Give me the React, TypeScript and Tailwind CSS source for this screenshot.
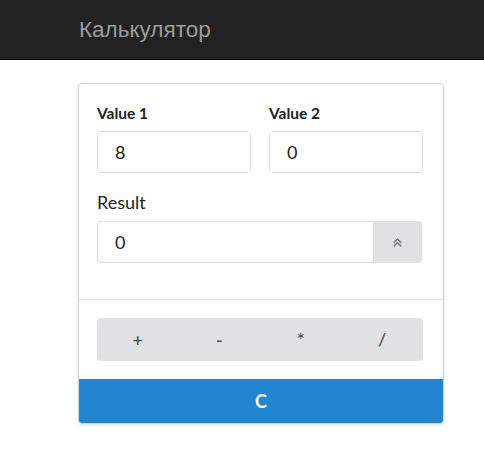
import { useState } from "react";

function DoubleUp() {
  return (
    <svg width="13" height="13" viewBox="0 0 12 12" fill="none" stroke="#707070" strokeWidth="1.2">
      <path d="M2.5 6.2 L6 2.7 L9.5 6.2" />
      <path d="M2.5 9.7 L6 6.2 L9.5 9.7" />
    </svg>
  );
}

export default function App() {
  const [a, setA] = useState("8");
  const [b, setB] = useState("0");
  const [result, setResult] = useState("0");

  const calc = (op: string) => {
    const x = parseFloat(a) || 0;
    const y = parseFloat(b) || 0;
    let r = 0;
    if (op === "+") r = x + y;
    if (op === "-") r = x - y;
    if (op === "*") r = x * y;
    if (op === "/") r = y === 0 ? 0 : x / y;
    setResult(String(r));
  };

  return (
    <div className="min-h-screen bg-white font-['Lato',sans-serif] text-[#212121]">
      <header className="flex h-[60px] items-center border-b border-black bg-[#222] pl-[79px]">
        <span className="font-['Liberation_Sans',Arial,sans-serif] text-[22.5px] text-[#9d9d9d]">
          Калькулятор
        </span>
      </header>

      <div className="ml-[78px] mt-[23px] w-[366px] overflow-hidden rounded-[4px] border border-[#d4d4d5] shadow-[0_1px_3px_rgba(0,0,0,0.12)]">
        <div className="px-[18px] pb-[36px] pt-[19px]">
          <div className="flex gap-[18px]">
            <div className="w-[154px]">
              <label className="block text-[15.5px] font-bold leading-[20px]">Value 1</label>
              <input
                value={a}
                onChange={(e) => setA(e.target.value)}
                className="mt-[8px] h-[42px] w-full rounded-[4px] border border-[#dedede] px-[17px] text-[18px] outline-none"
              />
            </div>
            <div className="w-[154px]">
              <label className="block text-[15.5px] font-bold leading-[20px]">Value 2</label>
              <input
                value={b}
                onChange={(e) => setB(e.target.value)}
                className="mt-[8px] h-[42px] w-full rounded-[4px] border border-[#dedede] px-[17px] text-[18px] outline-none"
              />
            </div>
          </div>

          <label className="mt-[19px] block text-[18px] leading-[20px]">Result</label>
          <div className="mt-[9px] flex h-[42px] w-[325px]">
            <input
              value={result}
              readOnly
              className="h-full min-w-0 flex-1 rounded-l-[4px] border border-r-0 border-[#dedede] px-[17px] text-[18px] outline-none"
            />
            <button className="flex h-full w-[49px] items-center justify-center rounded-r-[4px] bg-[#e0e1e2]">
              <DoubleUp />
            </button>
          </div>
        </div>

        <div className="border-t border-[#e5e5e5] px-[18px] pb-[18px] pt-[18px]">
          <div className="flex h-[43px] w-[326px] rounded-[4px] bg-[#e0e1e2] text-[18px] font-semibold text-[#555]">
            {["+", "-", "*", "/"].map((op) => (
              <button key={op} onClick={() => calc(op)} className="flex-1">
                {op}
              </button>
            ))}
          </div>
        </div>

        <button
          onClick={() => {
            setA("");
            setB("");
            setResult("0");
          }}
          className="block h-[44px] w-full bg-[#2185d0] text-[18px] font-bold text-white"
        >
          C
        </button>
      </div>
    </div>
  );
}
